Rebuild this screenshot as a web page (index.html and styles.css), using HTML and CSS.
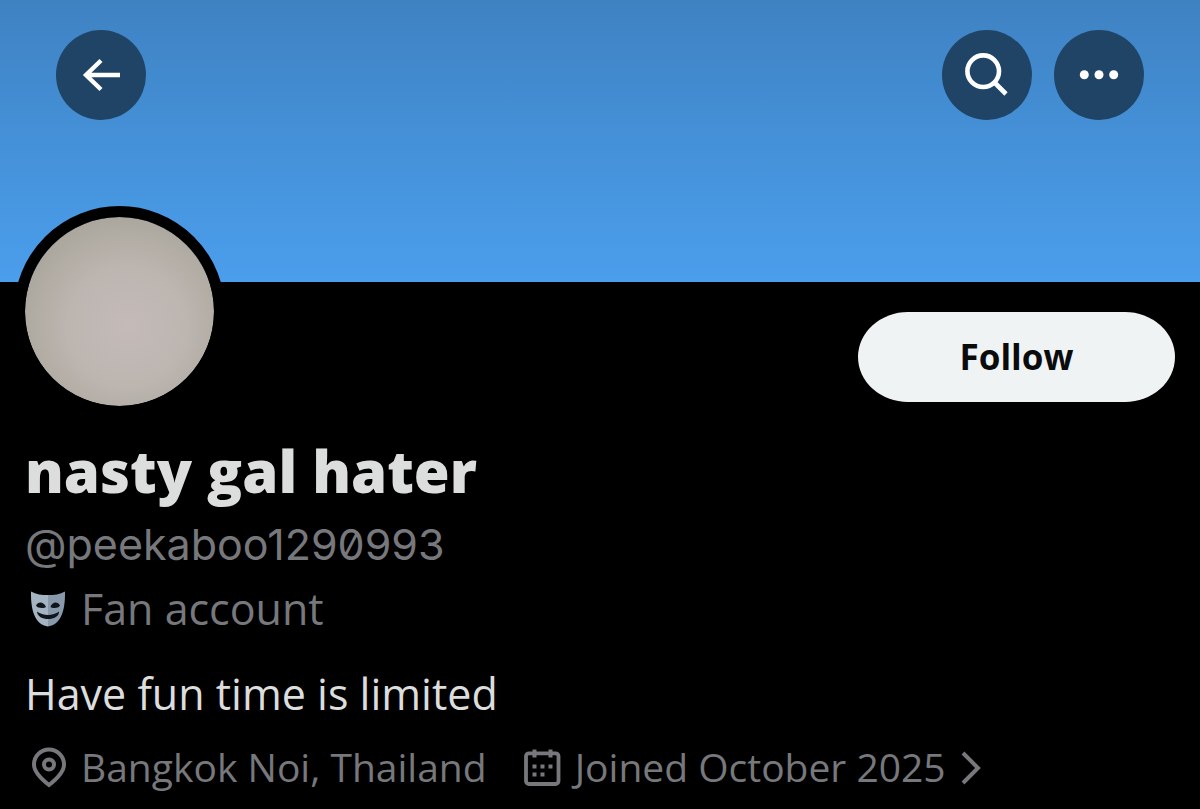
FILE: index.html
```html
<!DOCTYPE html>
<html lang="en">
<head>
<meta charset="utf-8">
<meta name="viewport" content="width=device-width, initial-scale=1">
<title>nasty gal hater</title>
<link rel="stylesheet" href="styles.css">
</head>
<body>
<header class="banner">
  <button class="round-button" type="button" aria-label="Back">
    <svg viewBox="0 0 90 90" fill="none" stroke="#fff" stroke-width="4.4"><path d="M64 45H30M45 30.500L30 45l15 14.500"/></svg>
  </button>
  <div class="banner-actions">
    <button class="round-button" type="button" aria-label="Search">
      <svg viewBox="0 0 90 90" fill="none" stroke="#fff" stroke-width="4.600"><circle cx="41.200" cy="41.200" r="15.800"/><path d="M52.500 52.500L64 64"/></svg>
    </button>
    <button class="round-button" type="button" aria-label="More">
      <svg viewBox="0 0 90 90" fill="#fff"><circle cx="30.300" cy="44.800" r="4.500"/><circle cx="45" cy="44.800" r="4.500"/><circle cx="59.700" cy="44.800" r="4.500"/></svg>
    </button>
  </div>
</header>
<main class="profile">
  <div class="profile-top">
    <div class="avatar" role="img" aria-label="Profile picture"></div>
    <button class="follow" type="button">Follow</button>
  </div>
  <h1 class="name">nasty gal hater</h1>
  <p class="handle">@peekaboo1290993</p>
  <p class="label">
    <svg class="mask" viewBox="0 0 36 38" aria-hidden="true">
      <path fill="#a5b4c3" d="M1 1.500C6 4.500 12 5 18 5v31.500C7.500 35 .5 25 1 1.500z"/>
      <path fill="#8799ab" d="M35 1.500C30 4.500 24 5 18 5v31.500C28.500 35 35.500 25 35 1.500z"/>
      <path fill="#10151c" d="M6 15.500c2-4.500 8-4 10 1.500-2 1.500-8.500 1.500-10-1.500zM30 15.500c-2-4.500-8-4-9.500 1.500 2 1.500 8 1.500 9.500-1.500z"/>
      <path fill="#10151c" d="M7 21.500c6 4.500 16 4.500 22 0 .8 9.500-21.500 10.500-22 0z"/>
    </svg>
    <span>Fan account</span>
  </p>
  <p class="bio">Have fun time is limited</p>
  <div class="meta">
    <span class="meta-item">
      <svg class="pin" viewBox="0 0 36 42" fill="none" stroke="#76787c" stroke-width="4"><path d="M18 39C9 32 3 25.500 3 18.500a15 15 0 0 1 30 0C33 25.500 27 32 18 39z"/><circle cx="18" cy="18.500" r="5"/></svg>
      <span>Bangkok Noi, Thailand</span>
    </span>
    <a class="meta-item" href="#joined">
      <svg class="calendar" viewBox="0 0 38 38" fill="none" stroke="#76787c"><rect x="3" y="5.300" width="32.500" height="30.700" rx="3" stroke-width="3.800"/><path stroke-width="4" d="M11.500 1.500v8M27.500 1.500v8M9.500 18.500h4M17.500 18.500h4M25.500 18.500h4M9.500 26.500h4M17.500 26.500h4"/></svg>
      <span>Joined October 2025</span>
      <svg class="chevron" viewBox="0 0 22 36" fill="none" stroke="#76787c" stroke-width="4"><path d="M3 4l15 15L3 34"/></svg>
    </a>
  </div>
</main>
</body>
</html>
```
FILE: styles.css
```css
* {
  box-sizing: border-box;
}

body {
  margin: 0;
  background: #000;
  color: #dcdddd;
  font-family: "Open Sans", "Noto Sans", sans-serif;
}

h1,
p {
  margin: 0;
}

button {
  padding: 0;
  border: 0;
  font-family: inherit;
  cursor: pointer;
}

svg {
  display: block;
  flex: none;
}

.banner {
  display: flex;
  justify-content: space-between;
  align-items: flex-start;
  height: 282px;
  padding: 30px 56px;
  background: linear-gradient(#3f82c2, #448fd6 45%, #4b9eec);
}

.banner-actions {
  display: flex;
  gap: 22px;
}

.round-button {
  width: 90px;
  height: 90px;
  border-radius: 50%;
  background: #204465;
}

.profile-top {
  display: flex;
  justify-content: space-between;
  align-items: flex-start;
  margin-bottom: 19px;
  padding: 0 25px 0 14px;
}

.avatar {
  width: 211px;
  height: 211px;
  margin-top: -76px;
  border: 11px solid #000;
  border-radius: 50%;
  background: radial-gradient(circle at 54% 58%, #c4bbb8, #bcb5b0 40%, #a3a094 90%) padding-box #000;
}

.follow {
  width: 317px;
  height: 90px;
  margin-top: 30px;
  padding-bottom: 2px;
  border-radius: 50px / 45px;
  background: #eff3f4;
  color: #0a0b0d;
  font-size: 35px;
  font-weight: 700;
}

.name,
.handle,
.label,
.bio,
.meta {
  padding: 0 25px;
}

.name {
  font-size: 58px;
  font-weight: 800;
  line-height: 70px;
}

.handle {
  margin-top: 8px;
  color: #76787c;
  font-family: Inter, sans-serif;
  font-feature-settings: "zero";
  font-size: 43px;
  line-height: 60px;
}

.label {
  display: flex;
  align-items: center;
  gap: 15px;
  margin-top: 5px;
  padding-left: 30px;
  color: #76787c;
  font-size: 43px;
  line-height: 60px;
}

.mask {
  width: 36px;
  height: 38px;
}

.bio {
  margin-top: 25px;
  font-size: 43px;
  line-height: 60px;
}

.meta {
  display: flex;
  flex-wrap: wrap;
  column-gap: 36px;
  margin-top: 15px;
  padding-left: 31px;
  color: #76787c;
  font-size: 39px;
  line-height: 56px;
}

.meta-item {
  display: flex;
  align-items: center;
  gap: 14px;
  color: inherit;
  text-decoration: none;
}

.pin {
  width: 36px;
  height: 42px;
}

.calendar {
  width: 38px;
  height: 38px;
}

.chevron {
  width: 22px;
  height: 36px;
}
```
